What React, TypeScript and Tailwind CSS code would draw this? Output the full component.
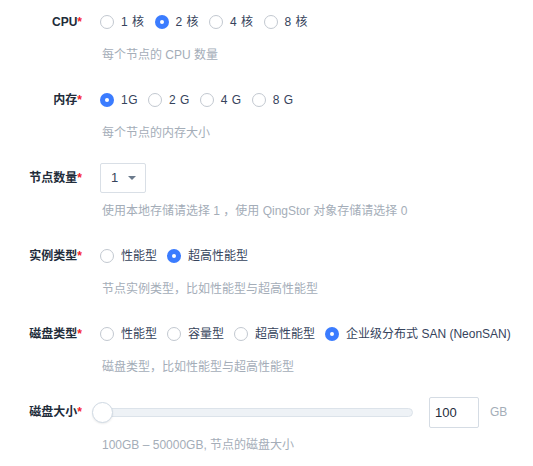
import { useState } from "react";

type Option = { label: string; value: string };

const font = {
  fontFamily: '"Liberation Sans", "Noto Sans CJK SC", sans-serif',
};

const Radio = ({
  options,
  value,
  onChange,
  spaced,
}: {
  options: Option[];
  value: string;
  onChange: (v: string) => void;
  spaced?: boolean;
}) => (
  <div className="flex items-center flex-nowrap">
    {options.map((o) => {
      const checked = o.value === value;
      return (
        <label
          key={o.value}
          className="flex items-center shrink-0 mr-[10px] cursor-pointer"
          onClick={() => onChange(o.value)}
        >
          {checked ? (
            <span className="w-[14px] h-[14px] rounded-full bg-[#3b7cff] flex items-center justify-center">
              <span className="w-[4px] h-[4px] rounded-full bg-white" />
            </span>
          ) : (
            <span className="w-[14px] h-[14px] rounded-full border border-[#c2c8d0] bg-white" />
          )}
          <span
            className={
              spaced
                ? "ml-[7px] text-[12px] text-[#36435c] tracking-[0.5px] whitespace-nowrap"
                : "ml-[7px] text-[12px] text-[#36435c] whitespace-nowrap"
            }
          >
            {o.label}
          </span>
        </label>
      );
    })}
  </div>
);

const FormItem = ({
  label,
  help,
  children,
}: {
  label: string;
  help: string;
  children: React.ReactNode;
}) => (
  <div className="flex mb-[21px]">
    <div className="w-[82px] h-[32px] flex items-center justify-end text-[12px] font-bold text-[#222c3a] shrink-0">
      {label}
      <span className="text-[#f5222d]">*</span>
    </div>
    <div className="ml-[18px] flex-1">
      <div className="h-[32px] flex items-center">{children}</div>
      <div className="mt-[9px] h-[16px] leading-[16px] text-[12px] text-[#a4adb8] pl-[2px] whitespace-nowrap">
        {help}
      </div>
    </div>
  </div>
);

export default function App() {
  const [cpu, setCpu] = useState("2");
  const [mem, setMem] = useState("1");
  const [kind, setKind] = useState("high");
  const [disk, setDisk] = useState("san");
  const [size, setSize] = useState("100");

  return (
    <div className="w-[533px] h-[466px] bg-white pt-[6px] overflow-hidden" style={font}>
      <FormItem label="CPU" help="每个节点的 CPU 数量">
        <Radio
          spaced
          value={cpu}
          onChange={setCpu}
          options={[
            { label: "1 核", value: "1" },
            { label: "2 核", value: "2" },
            { label: "4 核", value: "4" },
            { label: "8 核", value: "8" },
          ]}
        />
      </FormItem>

      <FormItem label="内存" help="每个节点的内存大小">
        <Radio
          spaced
          value={mem}
          onChange={setMem}
          options={[
            { label: "1G", value: "1" },
            { label: "2 G", value: "2" },
            { label: "4 G", value: "4" },
            { label: "8 G", value: "8" },
          ]}
        />
      </FormItem>

      <FormItem
        label="节点数量"
        help="使用本地存储请选择 1 ，使用 QingStor 对象存储请选择 0"
      >
        <div className="w-[46px] h-[30px] border border-[#d9dfe6] rounded-[2px] flex items-center justify-between pl-[10px] pr-[9px] text-[13px] text-[#36435c]">
          <span>1</span>
          <span className="w-0 h-0 border-l-[4px] border-r-[4px] border-t-[4px] border-l-transparent border-r-transparent border-t-[#6b7a8c]" />
        </div>
      </FormItem>

      <FormItem label="实例类型" help="节点实例类型，比如性能型与超高性能型">
        <Radio
          value={kind}
          onChange={setKind}
          options={[
            { label: "性能型", value: "perf" },
            { label: "超高性能型", value: "high" },
          ]}
        />
      </FormItem>

      <FormItem label="磁盘类型" help="磁盘类型，比如性能型与超高性能型">
        <Radio
          value={disk}
          onChange={setDisk}
          options={[
            { label: "性能型", value: "perf" },
            { label: "容量型", value: "cap" },
            { label: "超高性能型", value: "high" },
            { label: "企业级分布式 SAN (NeonSAN)", value: "san" },
          ]}
        />
      </FormItem>

      <FormItem label="磁盘大小" help="100GB – 50000GB, 节点的磁盘大小">
        <div className="relative w-[313px] h-[9px] rounded-full bg-[#eef2f6] border border-[#dce3ea]">
          <span className="absolute left-[-9px] top-[-7px] w-[21px] h-[21px] rounded-full bg-white border border-[#cfd9e3] shadow-[0_1px_2px_rgba(0,0,0,0.08)]" />
        </div>
        <input
          value={size}
          onChange={(e) => setSize(e.target.value)}
          className="ml-[16px] w-[50px] h-[31px] border border-[#d5dce4] rounded-[2px] pl-[5px] text-[13px] text-[#1f2d3d] outline-none"
        />
        <span className="ml-[11px] text-[12px] text-[#a4adb8]">GB</span>
      </FormItem>
    </div>
  );
}
